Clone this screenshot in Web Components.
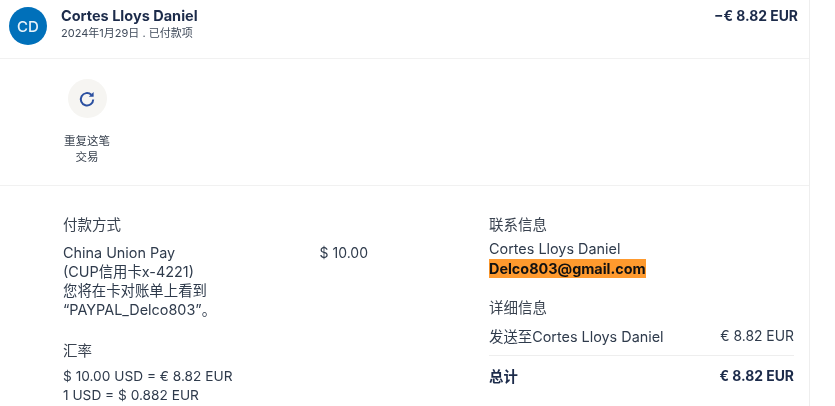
<!DOCTYPE html>
<html lang="zh"><head><meta charset="utf-8">
<style>
html,body{margin:0;padding:0;background:#fff;overflow:hidden}
body{width:835px;height:406px;font-family:Inter,"Noto Sans CJK SC",sans-serif;color:#2c2e2f}
txn-page{filter:blur(.3px)}
</style></head><body>
<txn-page>
  <txn-header slot="header" name="Cortes Lloys Daniel" sub="2024年1月29日 . 已付款项" amount="−€ 8.82 EUR" initials="CD"></txn-header>
  <txn-actions slot="actions"></txn-actions>
  <txn-details slot="details"></txn-details>
</txn-page>
<script>
function def(name, html, init){
  customElements.define(name, class extends HTMLElement{
    connectedCallback(){
      if(this.shadowRoot) return;
      const r=this.attachShadow({mode:'open'});
      let h=html;
      for(const a of this.getAttributeNames()) h=h.split('{{'+a+'}}').join(this.getAttribute(a));
      r.innerHTML=h;
    }
  });
}
def('txn-page',`<style>
:host{display:block;width:809px;height:406px;border-right:1px solid #eeeeee;box-sizing:content-box;overflow:hidden}
.s{display:block}
</style><slot name="header" class="s"></slot><slot name="actions" class="s"></slot><slot name="details" class="s"></slot>`);
def('txn-header',`<style>
:host{display:flex;box-sizing:border-box;height:59px;border-bottom:1px solid #f1f1f1;padding:7px 11px 0 9px;align-items:flex-start}
.av{width:38px;height:38px;border-radius:50%;background:#0070ba;color:#e8f3fa;font:500 15px/39px Inter,sans-serif;text-align:center;flex:none}
.m{margin-left:14px;flex:1}
.n{font:700 14.5px/16px Inter,sans-serif;color:#1c2b4a;margin-top:1px}
.d{font:400 11px/14px Inter,"Noto Sans CJK SC",sans-serif;color:#3f4a5a;margin-top:2px}
.a{font:700 13.9px/16px Inter,sans-serif;color:#1c2b4a;margin-top:1px}
</style><div class="av">{{initials}}</div><div class="m"><div class="n">{{name}}</div><div class="d">{{sub}}</div></div><div class="a">{{amount}}</div>`);
def('txn-actions',`<style>
:host{display:block;box-sizing:border-box;height:127px;border-bottom:1px solid #f1f1f1;padding:20px 0 0 57px}
.b{width:60px;display:flex;flex-direction:column;align-items:center}
.c{width:39px;height:39px;border-radius:50%;background:#f6f5f2;display:flex;align-items:center;justify-content:center}
.t{margin-top:14px;font:400 11.5px/16px "Noto Sans CJK SC",sans-serif;color:#3a4350;text-align:center;width:48px}
</style><div class="b"><div class="c"><svg width="18" height="18" viewBox="0 0 18 18" fill="none" stroke="#2a4fa0" stroke-width="2"><path d="M15.2 9.4a6.2 6.2 0 1 1-1.9-4.6"/><path d="M15.6 1.9v4.8h-4.8z" fill="#2a4fa0" stroke="none"/></svg></div><div class="t">重复这笔交易</div></div>`);
def('txn-details',`<style>
:host{display:grid;grid-template-columns:426px 305px;padding:29px 0 0 63px;font:400 14.4px/19px Inter,"Noto Sans CJK SC",sans-serif;color:#2f3b4c}
h3{margin:0 0 10px;font:400 14.5px/19px Inter,"Noto Sans CJK SC",sans-serif;color:#3a4350}
h3.p{margin-bottom:9px}
.pay{display:flex;width:305px;justify-content:space-between;margin-bottom:22px}
.pay>div:first-child{width:190px}
.num{font-size:13.7px}
.amt{font-size:14px}
.mail{display:inline-block;background:#ff9a2e;color:#111;font-weight:700;line-height:19px;vertical-align:top;margin-top:1px}
.block{margin-bottom:20px}
.row{display:flex;justify-content:space-between}
.r1{padding-bottom:9px;border-bottom:1px solid #eeeeee;margin-bottom:11px}
.tot{font-weight:700;color:#1c2b4a}
.rn{font-size:13.9px}
h3.x{margin-bottom:5px}
h3.y{margin-bottom:7px;margin-top:1px}
</style>
<section><h3 class="p">付款方式</h3>
<div class="pay"><div>China Union Pay<br>(CUP信用卡x-4221)<br>您将在卡对账单上看到<br>“PAYPAL_Delco803”。</div><div class="amt">$ 10.00</div></div>
<h3 class="y">汇率</h3><div class="num">$ 10.00 USD = € 8.82 EUR<br>1 USD = $ 0.882 EUR</div></section>
<section><h3 class="x">联系信息</h3><div class="block">Cortes Lloys Daniel<br><span class="mail">Delco803@gmail.com</span></div>
<h3>详细信息</h3><div class="row r1"><span>发送至Cortes Lloys Daniel</span><span class="rn">€ 8.82 EUR</span></div>
<div class="row tot"><span>总计</span><span class="rn">€ 8.82 EUR</span></div></section>`);
</script></body></html>
